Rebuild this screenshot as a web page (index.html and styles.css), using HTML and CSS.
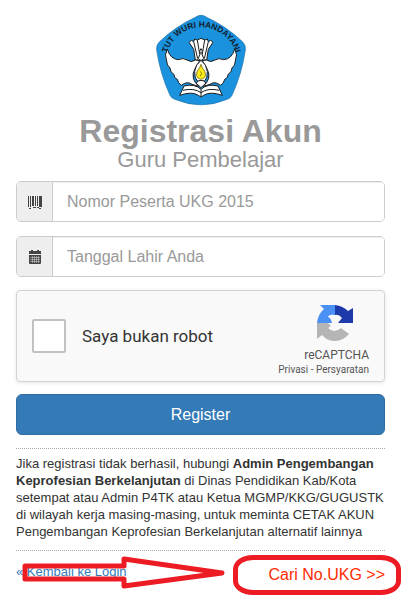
FILE: index.html
```html
<!DOCTYPE html>
<html lang="id">
<head>
  <meta charset="UTF-8" />
  <meta name="viewport" content="width=device-width, initial-scale=1.0"/>
  <title>Registrasi Akun - Guru Pembelajar</title>
  <link rel="stylesheet" href="styles.css">
</head>
<body>
  <header class="page-header">
    <svg class="logo" viewBox="18 14 270 272" role="img" aria-label="Tut Wuri Handayani">
      <path d="M153 16 Q162 16 170 22 Q230 50 276 94 Q288 104 286 120 Q276 190 246 256 Q240 267 228 269 Q153 300 78 269 Q66 267 60 256 Q30 190 20 120 Q18 104 30 94 Q76 50 136 22 Q144 16 153 16 Z" fill="#1b92de" stroke="#1b6ea6" stroke-width="2"/>
      <path id="motto" d="M51 130 A107 107 0 0 1 257 130" fill="none"/>
      <text class="motto"><textPath href="#motto" startOffset="50%">TUT WURI HANDAYANI</textPath></text>
      <g fill="#fff" stroke="#1c1c1c" stroke-width="3" stroke-linejoin="round">
        <path d="M136 150 L131 118 L117 97 L124 91 L131 95 L134 87 L142 90 L153 85 L164 90 L172 87 L175 95 L182 91 L189 97 L175 118 L170 150 Z"/>
        <path d="M131 95 L143 146 M142 90 L149 132 M164 90 L157 132 M175 95 L163 146" fill="none"/>
        <path d="M136 150 Q124 159 111 150 Q100 142 85 149 Q60 147 52 117 Q42 134 50 153 Q50 166 60 174 Q61 188 71 192 Q73 206 82 208 Q84 220 94 226 Q112 212 126 223 L146 229 Q120 205 134 178 L149 152 Z"/>
        <path d="M170 150 Q182 159 195 150 Q206 142 221 149 Q246 147 254 117 Q264 134 256 153 Q256 166 246 174 Q245 188 235 192 Q233 206 224 208 Q222 220 212 226 Q194 212 180 223 L160 229 Q186 205 172 178 L157 152 Z"/>
        <path d="M153 116 Q160 123 155 130 L161 145 Q156 151 153 151 Q150 151 145 145 L151 130 Q146 123 153 116 Z"/>
        <path d="M153 151 L140 165 L134 184 Q133 204 142 213 L164 213 Q173 204 172 184 L166 165 Z"/>
        <path d="M153 233 L138 219 Q145 211 153 211 Q161 211 168 219 Z"/>
        <path d="M102 228 Q134 220 153 238 Q172 220 204 228 L217 256 Q180 243 161 256 L153 261 L145 256 Q126 243 89 256 Z"/>
        <path d="M98 241 Q132 233 153 248 Q174 233 208 241 M153 238 V259" fill="none"/>
      </g>
      <path d="M153 163 Q156 175 164 183 Q172 204 153 208 Q134 204 142 183 Q150 175 153 163 Z" fill="#ffec16" stroke="#4f4a00" stroke-width="2"/>
      <path d="M151 184 L155 190 L150 199" fill="none" stroke="#4f4a00" stroke-width="2"/>
    </svg>
    <h1>Registrasi Akun</h1>
    <p class="subtitle">Guru Pembelajar</p>
  </header>

  <main>
    <form class="register-form">
      <div class="input-group">
        <label for="nomor" aria-label="Nomor Peserta UKG 2015">
          <svg class="icon" viewBox="0 0 14 14" fill="#444">
            <path d="M0 1h1v11H0zM2 1h1v11H2zM4 1h2v10H4zM7 1h1v10H7zM9 1h1v10H9zM11 1h1v11h-1zM12 1h2v11h-2zM1 13h2v1H1zM5 12h3v1H5zM9 12h2v1H9zM11 13h2v1h-2z"/>
          </svg>
        </label>
        <input type="text" id="nomor" placeholder="Nomor Peserta UKG 2015">
      </div>

      <div class="input-group">
        <label for="tanggal" aria-label="Tanggal Lahir Anda">
          <svg class="icon" viewBox="0 0 14 14">
            <path d="M1 1h2V0h2v1h4V0h2v1h2v3H1zM1 5h12v8q0 1-1 1H2q-1 0-1-1z" fill="#444"/>
            <path d="M2 7.5h10M2 9.5h10M2 11.5h10M4.5 6v7M6.5 6v7M8.5 6v7M10.5 6v7" stroke="#ddd" stroke-width="0.5"/>
          </svg>
        </label>
        <input type="text" id="tanggal" placeholder="Tanggal Lahir Anda">
      </div>

      <div class="captcha">
        <input type="checkbox" id="robot">
        <label for="robot">Saya bukan robot</label>
        <div class="captcha-brand">
          <svg class="captcha-logo" viewBox="0 0 36 36">
            <path d="M18 0 V10 Q12 9 11 12 Q14 13 15 18 H0 Q1 9 7 4 L3 0 Z" fill="#4a90f5"/>
            <path d="M18 0 Q26 1 31 6 L36 3 V18 H21 L25 13 Q22 9 18 10 Z" fill="#1c3aa9"/>
            <path d="M0 18 H11 L14 21 L11 23 Q17 29 24 23 L32 29 Q26 36 18 36 Q10 36 5 30 L0 34 Z" fill="#b5b5b5"/>
          </svg>
          <span class="captcha-name">reCAPTCHA</span>
          <span class="captcha-links"><a href="#">Privasi</a> - <a href="#">Persyaratan</a></span>
        </div>
      </div>

      <button type="submit" class="register-btn">Register</button>
    </form>

    <p class="help-text">
      Jika registrasi tidak berhasil, hubungi <strong>Admin Pengembangan Keprofesian Berkelanjutan</strong> di Dinas Pendidikan Kab/Kota setempat atau Admin P4TK atau Ketua MGMP/KKG/GUGUSTK di wilayah kerja masing-masing, untuk meminta CETAK AKUN Pengembangan Keprofesian Berkelanjutan alternatif lainnya
    </p>
  </main>

  <footer class="page-links">
    <a href="#" class="back-link">&laquo; Kembali ke Login</a>
    <a href="#" class="search-link">Cari No.UKG &gt;&gt;</a>
    <svg class="arrow" viewBox="0 0 204 36" aria-hidden="true">
      <path d="M3 11 H102 V4 L200 18 L102 31 V24 H3 Z"/>
    </svg>
  </footer>
</body>
</html>
```

FILE: styles.css
```css
* {
  margin: 0;
  padding: 0;
  box-sizing: border-box;
}

body {
  background-color: #fff;
  color: #333;
  font-family: "Liberation Sans", Arial, sans-serif;
  font-size: 13px;
  line-height: 17px;
  padding: 14px 17px 12px 16px;
}

a {
  color: #337ab7;
  text-decoration: none;
}

/* header */
.page-header {
  color: #999;
  text-align: center;
}

.logo {
  display: block;
  width: 90px;
  height: 92px;
  margin: 0 auto 8px;
}

.motto {
  font-size: 25px;
  font-weight: bold;
  text-anchor: middle;
  fill: #10202c;
}

h1 {
  font-size: 32px;
  line-height: 34px;
}

.subtitle {
  font-size: 22px;
  line-height: 24px;
}

/* form */
.register-form {
  display: flex;
  flex-direction: column;
  gap: 14px;
  padding-top: 9px;
}

.input-group {
  display: flex;
  height: 41px;
  border: 1px solid #ccc;
  border-radius: 5px;
  overflow: hidden;
}

.input-group label {
  display: flex;
  align-items: center;
  justify-content: center;
  width: 36px;
  background-color: #eee;
  border-right: 1px solid #ccc;
}

.icon {
  width: 14px;
  height: 14px;
}

.input-group input {
  flex: 1;
  min-width: 0;
  border: none;
  padding: 0 14px;
  font: inherit;
  font-size: 16px;
  color: #555;
  box-shadow: inset 0 1px 1px rgba(0, 0, 0, 0.075);
}

.input-group input::placeholder {
  color: #999;
}

.captcha {
  display: flex;
  align-items: center;
  height: 92px;
  margin-top: -1px;
  padding: 0 15px;
  background-color: #f9f9f9;
  border: 1px solid #d3d3d3;
  border-radius: 4px;
  box-shadow: 0 1px 4px rgba(0, 0, 0, 0.1);
  font-family: Roboto, sans-serif;
}

.captcha input {
  appearance: none;
  width: 34px;
  height: 34px;
  margin-right: 16px;
  background-color: #fff;
  border: 2px solid #c1c1c1;
  border-radius: 2px;
}

.captcha label {
  flex: 1;
  font-size: 17px;
  color: #333;
}

.captcha-brand {
  display: flex;
  flex-direction: column;
  align-items: flex-end;
  padding-top: 8px;
  color: #555;
}

.captcha-logo {
  width: 36px;
  height: 36px;
  margin: 0 16px 6px 0;
}

.captcha-name {
  font-size: 12px;
  line-height: 17px;
}

.captcha-links {
  font-size: 10px;
  line-height: 12px;
}

.captcha-links a {
  color: #555;
}

.register-btn {
  height: 41px;
  margin-top: -2px;
  background-color: #337ab7;
  color: #fff;
  border: 1px solid #2e6da4;
  border-radius: 6px;
  font: inherit;
  font-size: 16px;
  cursor: pointer;
}

/* help */
.help-text {
  margin-top: 13px;
  padding: 6px 0 10px;
  border-top: 1px dotted #aaa;
  border-bottom: 1px dotted #aaa;
}

/* bottom links */
.page-links {
  position: relative;
  display: flex;
  justify-content: space-between;
  align-items: flex-start;
  padding-top: 12px;
}

.search-link {
  position: relative;
  font-size: 16px;
  line-height: 24px;
  color: #ff2a00;
}

.search-link::after {
  content: "";
  position: absolute;
  inset: -8px -16px -8px -36px;
  border: 5px solid #ed1c24;
  border-radius: 20px / 14px;
}

.arrow {
  position: absolute;
  left: 6px;
  top: 4px;
  width: 204px;
  height: 36px;
  pointer-events: none;
}

.arrow path {
  fill: none;
  stroke: #ed1c24;
  stroke-width: 5;
  stroke-linejoin: round;
}
```
